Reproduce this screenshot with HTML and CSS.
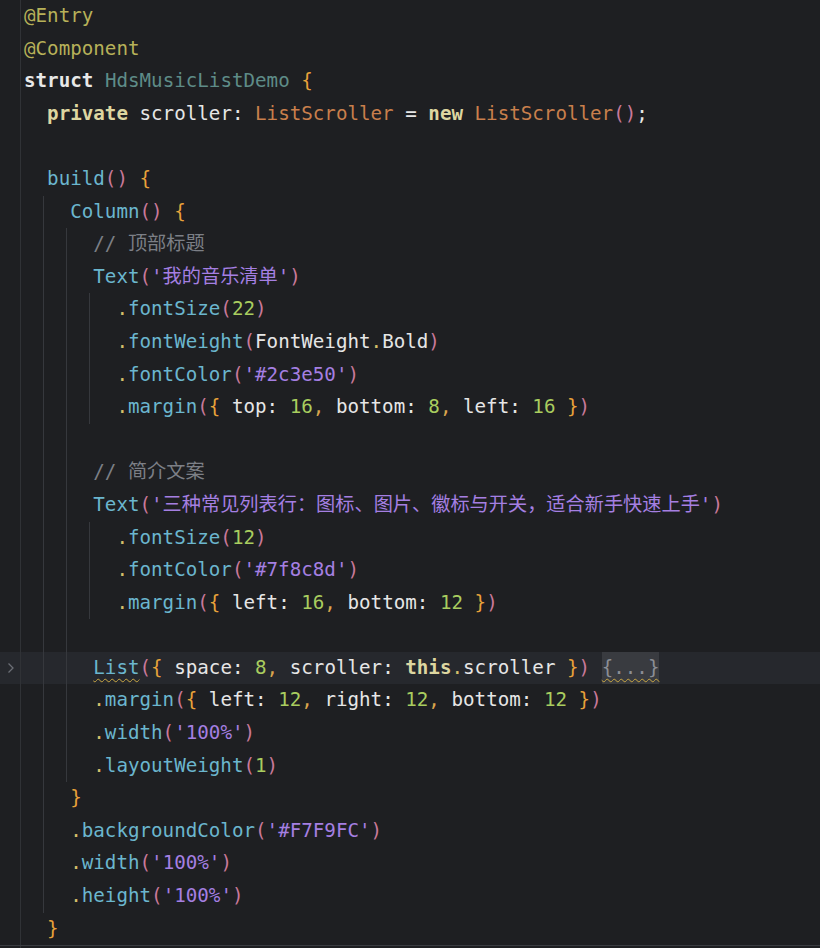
FILE: index.html
```html
<!DOCTYPE html>
<html lang="zh">
<head>
<meta charset="utf-8">
<title>HdsMusicListDemo</title>
<link rel="stylesheet" href="styles.css">
</head>
<body>
<div class="editor">
  <div class="ln"><div class="gut"></div><div class="code"><span class="an">@Entry</span></div></div>
  <div class="ln"><div class="gut"></div><div class="code"><span class="an">@Component</span></div></div>
  <div class="ln"><div class="gut"></div><div class="code"><span class="kw">struct</span> <span class="cls">HdsMusicListDemo</span> <span class="b">{</span></div></div>
  <div class="ln"><div class="gut"></div><div class="ind"></div><div class="code"><span class="kw2">private</span> scroller: <span class="typ">ListScroller</span> = <span class="kw2">new</span> <span class="typ">ListScroller</span><span class="p">()</span>;</div></div>
  <div class="ln"><div class="gut"></div><div class="code"></div></div>
  <div class="ln"><div class="gut"></div><div class="ind"></div><div class="code"><span class="fn">build</span><span class="p">()</span> <span class="b">{</span></div></div>
  <div class="ln"><div class="gut"></div><div class="ind g"></div><div class="ind"></div><div class="code"><span class="fn">Column</span><span class="p">()</span> <span class="b">{</span></div></div>
  <div class="ln"><div class="gut"></div><div class="ind g"></div><div class="ind g"></div><div class="ind"></div><div class="code"><span class="c">// 顶部标题</span></div></div>
  <div class="ln"><div class="gut"></div><div class="ind g"></div><div class="ind g"></div><div class="ind"></div><div class="code"><span class="fn">Text</span><span class="p">(</span><span class="s">'我的音乐清单'</span><span class="p">)</span></div></div>
  <div class="ln"><div class="gut"></div><div class="ind g"></div><div class="ind g"></div><div class="ind g"></div><div class="ind"></div><div class="code"><span class="d">.</span><span class="fn">fontSize</span><span class="p">(</span><span class="n">22</span><span class="p">)</span></div></div>
  <div class="ln"><div class="gut"></div><div class="ind g"></div><div class="ind g"></div><div class="ind g"></div><div class="ind"></div><div class="code"><span class="d">.</span><span class="fn">fontWeight</span><span class="p">(</span>FontWeight<span class="d">.</span>Bold<span class="p">)</span></div></div>
  <div class="ln"><div class="gut"></div><div class="ind g"></div><div class="ind g"></div><div class="ind g"></div><div class="ind"></div><div class="code"><span class="d">.</span><span class="fn">fontColor</span><span class="p">(</span><span class="s">'#2c3e50'</span><span class="p">)</span></div></div>
  <div class="ln"><div class="gut"></div><div class="ind g"></div><div class="ind g"></div><div class="ind g"></div><div class="ind"></div><div class="code"><span class="d">.</span><span class="fn">margin</span><span class="p">(</span><span class="b">{</span> top: <span class="n">16</span><span class="cm">,</span> bottom: <span class="n">8</span><span class="cm">,</span> left: <span class="n">16</span> <span class="b">}</span><span class="p">)</span></div></div>
  <div class="ln"><div class="gut"></div><div class="ind g"></div><div class="ind g"></div><div class="code"></div></div>
  <div class="ln"><div class="gut"></div><div class="ind g"></div><div class="ind g"></div><div class="ind"></div><div class="code"><span class="c">// 简介文案</span></div></div>
  <div class="ln"><div class="gut"></div><div class="ind g"></div><div class="ind g"></div><div class="ind"></div><div class="code"><span class="fn">Text</span><span class="p">(</span><span class="s">'三种常见列表行：图标、图片、徽标与开关，适合新手快速上手'</span><span class="p">)</span></div></div>
  <div class="ln"><div class="gut"></div><div class="ind g"></div><div class="ind g"></div><div class="ind g"></div><div class="ind"></div><div class="code"><span class="d">.</span><span class="fn">fontSize</span><span class="p">(</span><span class="n">12</span><span class="p">)</span></div></div>
  <div class="ln"><div class="gut"></div><div class="ind g"></div><div class="ind g"></div><div class="ind g"></div><div class="ind"></div><div class="code"><span class="d">.</span><span class="fn">fontColor</span><span class="p">(</span><span class="s">'#7f8c8d'</span><span class="p">)</span></div></div>
  <div class="ln"><div class="gut"></div><div class="ind g"></div><div class="ind g"></div><div class="ind g"></div><div class="ind"></div><div class="code"><span class="d">.</span><span class="fn">margin</span><span class="p">(</span><span class="b">{</span> left: <span class="n">16</span><span class="cm">,</span> bottom: <span class="n">12</span> <span class="b">}</span><span class="p">)</span></div></div>
  <div class="ln"><div class="gut"></div><div class="ind g"></div><div class="ind g"></div><div class="code"></div></div>
  <div class="ln cur"><div class="gut"><svg class="fold" width="8" height="12" viewBox="0 0 8 12"><path d="M1.5 1.5 L6 6 L1.5 10.5" fill="none" stroke="currentColor" stroke-width="1.3"/></svg></div><div class="ind g"></div><div class="ind g"></div><div class="ind"></div><div class="code"><span class="fn wavy">List</span><span class="p">(</span><span class="b">{</span> space: <span class="n">8</span><span class="cm">,</span> scroller: <span class="kw2">this</span><span class="d">.</span>scroller <span class="b">}</span><span class="p">)</span> <span class="folded wavy">{...}</span></div></div>
  <div class="ln"><div class="gut"></div><div class="ind g"></div><div class="ind g"></div><div class="ind"></div><div class="code"><span class="d">.</span><span class="fn">margin</span><span class="p">(</span><span class="b">{</span> left: <span class="n">12</span><span class="cm">,</span> right: <span class="n">12</span><span class="cm">,</span> bottom: <span class="n">12</span> <span class="b">}</span><span class="p">)</span></div></div>
  <div class="ln"><div class="gut"></div><div class="ind g"></div><div class="ind g"></div><div class="ind"></div><div class="code"><span class="d">.</span><span class="fn">width</span><span class="p">(</span><span class="s">'100%'</span><span class="p">)</span></div></div>
  <div class="ln"><div class="gut"></div><div class="ind g"></div><div class="ind g"></div><div class="ind"></div><div class="code"><span class="d">.</span><span class="fn">layoutWeight</span><span class="p">(</span><span class="n">1</span><span class="p">)</span></div></div>
  <div class="ln"><div class="gut"></div><div class="ind g"></div><div class="ind"></div><div class="code"><span class="b">}</span></div></div>
  <div class="ln"><div class="gut"></div><div class="ind g"></div><div class="ind"></div><div class="code"><span class="d">.</span><span class="fn">backgroundColor</span><span class="p">(</span><span class="s">'#F7F9FC'</span><span class="p">)</span></div></div>
  <div class="ln"><div class="gut"></div><div class="ind g"></div><div class="ind"></div><div class="code"><span class="d">.</span><span class="fn">width</span><span class="p">(</span><span class="s">'100%'</span><span class="p">)</span></div></div>
  <div class="ln"><div class="gut"></div><div class="ind g"></div><div class="ind"></div><div class="code"><span class="d">.</span><span class="fn">height</span><span class="p">(</span><span class="s">'100%'</span><span class="p">)</span></div></div>
  <div class="ln"><div class="gut"></div><div class="ind"></div><div class="code"><span class="b">}</span></div></div>
  <div class="ln end"><div class="gut"></div><div class="code"></div></div>
</div>
</body>
</html>
```

FILE: styles.css
```css
html, body {
  margin: 0;
  padding: 0;
  background: #1e1f22;
  height: 100%;
  overflow: hidden;
}

.editor {
  display: flex;
  flex-direction: column;
  font-family: "DejaVu Sans Mono", "Noto Sans CJK SC", monospace;
  font-size: 19.2px;
  color: #e6e6e6;
  width: 820px;
}

.ln {
  display: flex;
  align-items: stretch;
  height: 32.6px;
  line-height: 32.6px;
}

.ln.cur {
  background: #26282d;
}

.ln.end {
  height: 3px;
  border-top: 1px solid #3a3c41;
}

.gut {
  width: 20px;
  flex: none;
  border-right: 1px solid #303236;
  margin-right: 3px;
  display: flex;
  align-items: center;
  justify-content: center;
  color: #6b6e75;
}

.fold {
  margin-left: 2px;
}

.ind {
  width: 2ch;
  flex: none;
}

.ind.g {
  background-image: linear-gradient(#36383d, #36383d);
  background-size: 1px 100%;
  background-repeat: no-repeat;
  background-position: calc(100% - 3.5px) 0;
}

.code {
  white-space: pre;
  flex: 1;
}

.an { color: #b7b159; }
.kw { color: #e8e8e8; font-weight: bold; }
.kw2 { color: #ddd6a0; font-weight: bold; }
.cls { color: #5e8c88; }
.typ { color: #c97f4c; }
.fn { color: #6bb6ce; }
.p { color: #c9799a; }
.b { color: #e8a23a; }
.s { color: #a57fe2; }
.n { color: #a9cd5f; }
.c { color: #7c7f86; }
.d { color: #d4bf6a; }
.cm { color: #d9a54d; }

.wavy {
  text-decoration: underline wavy #c9a744;
  text-decoration-thickness: 1px;
  text-underline-offset: 4px;
}

.folded {
  color: #8b8e95;
  background: #393b40;
  display: inline-block;
  height: 32.6px;
}
```
